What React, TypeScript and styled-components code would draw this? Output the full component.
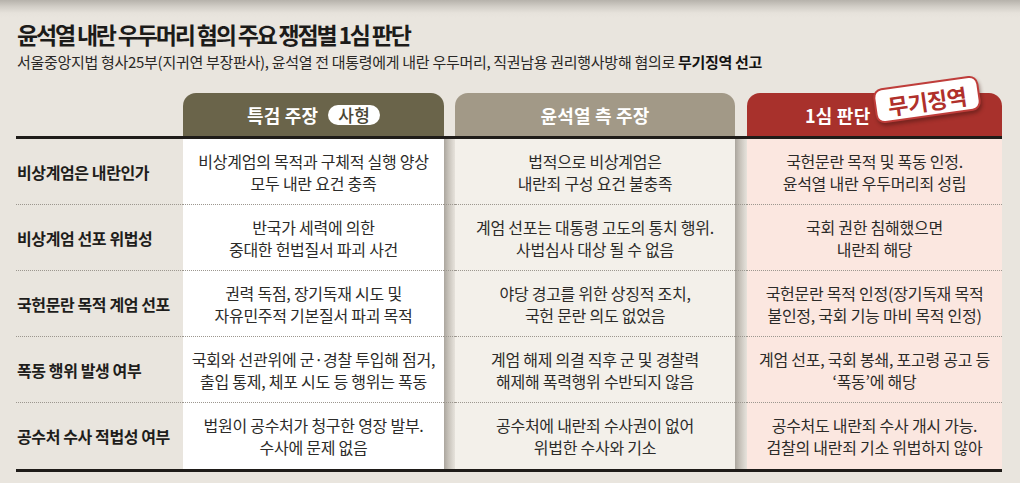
import React from "react";
import styled, { createGlobalStyle, css } from "styled-components";

const GlobalStyle = createGlobalStyle`
  html, body { margin: 0; padding: 0; background: #e9e5de; }
  * { box-sizing: border-box; }
  body { font-family: "Noto Sans CJK KR", "Noto Sans", sans-serif; }
`;

const Page = styled.div`
  width: 1020px;
  height: 483px;
  overflow: hidden;
  padding: 18px 0 0 16px;
  background: linear-gradient(#b6b2ab 0px, #d3cfc8 7px, #e6e2db 13px, #e9e5de 18px);
`;

const Title = styled.h1`
  margin: 0;
  padding-left: 1px;
  font-size: 23px;
  line-height: 32px;
  font-weight: 700;
  letter-spacing: -2.2px;
  color: #1c1b19;
`;

const Subtitle = styled.p`
  margin: 0;
  padding-left: 1px;
  font-size: 15px;
  line-height: 24px;
  letter-spacing: -0.3px;
  color: #2a2826;
  b { font-weight: 700; color: #141312; }
`;

const Table = styled.div`
  margin-top: 19px;
  width: 986px;
  display: grid;
  grid-template-columns: 167px 261px 11px 280px 12px 255px;
  grid-template-rows: 43px 3px repeat(5, 66px) 3px;
`;

type Tone = "olive" | "taupe" | "red";

const tabColors: Record<Tone, string> = {
  olive: "#6a644a",
  taupe: "#a29987",
  red: "#a8312c",
};

const Tab = styled.div<{ $tone: Tone; $start?: number }>`
  position: relative;
  background: ${(p) => tabColors[p.$tone]};
  border-radius: 13px 13px 0 0;
  display: flex;
  align-items: center;
  justify-content: ${(p) => (p.$start ? "flex-start" : "center")};
  padding-left: ${(p) => (p.$start ? `${p.$start}px` : "0")};
  gap: 10px;
  color: #ffffff;
  font-size: 18px;
  font-weight: 700;
  letter-spacing: 0.2px;
`;

const Pill = styled.span`
  display: inline-flex;
  align-items: center;
  justify-content: center;
  height: 20px;
  padding: 0 10px;
  border-radius: 10px;
  background: #ffffff;
  color: #4a4634;
  font-size: 17px;
  font-weight: 500;
  letter-spacing: 0.3px;
`;

const Badge = styled.span`
  position: absolute;
  left: 127px;
  top: -11px;
  width: 106px;
  height: 35px;
  display: flex;
  align-items: center;
  justify-content: center;
  background: #ffffff;
  border: 2px solid #bf3d3a;
  border-radius: 9px;
  color: #b0302b;
  font-size: 22px;
  font-weight: 700;
  letter-spacing: -0.5px;
  transform: rotate(-8deg);
  box-shadow: 1px 3px 4px rgba(60, 20, 15, 0.45);
`;

const Spacer = styled.div``;

const Rule = styled.div`
  grid-column: 1 / -1;
  background: #1f1c19;
`;

const rowLine = css<{ $last?: boolean }>`
  border-bottom: ${(p) => (p.$last ? "none" : "1px dotted #9c978f")};
`;

const Label = styled.div<{ $last?: boolean }>`
  ${rowLine};
  display: flex;
  align-items: center;
  padding-left: 1px;
  font-size: 16px;
  font-weight: 700;
  letter-spacing: -0.4px;
  color: #1e1d1b;
`;

const cellBg: Record<Tone, string> = {
  olive: "#ffffff",
  taupe: "#f3f0ea",
  red: "#fbe7e0",
};

const Cell = styled.div<{ $tone: Tone; $last?: boolean }>`
  ${rowLine};
  background: ${(p) => cellBg[p.$tone]};
  display: flex;
  align-items: center;
  justify-content: center;
  text-align: center;
  font-size: 16px;
  line-height: 22px;
  letter-spacing: -0.25px;
  color: #2c2b29;
`;

const Gap = styled.div<{ $last?: boolean }>`
  ${rowLine};
  background: linear-gradient(to right, #aba69e 0%, #c6c1b9 40%, #dcd8d1 80%, #e6e2db 100%);
`;

type Row = { label: string; a: string[]; b: string[]; c: string[] };

const rows: Row[] = [
  {
    label: "비상계엄은 내란인가",
    a: ["비상계엄의 목적과 구체적 실행 양상", "모두 내란 요건 충족"],
    b: ["법적으로 비상계엄은", "내란죄 구성 요건 불충족"],
    c: ["국헌문란 목적 및 폭동 인정.", "윤석열 내란 우두머리죄 성립"],
  },
  {
    label: "비상계엄 선포 위법성",
    a: ["반국가 세력에 의한", "중대한 헌법질서 파괴 사건"],
    b: ["계엄 선포는 대통령 고도의 통치 행위.", "사법심사 대상 될 수 없음"],
    c: ["국회 권한 침해했으면", "내란죄 해당"],
  },
  {
    label: "국헌문란 목적 계엄 선포",
    a: ["권력 독점, 장기독재 시도 및", "자유민주적 기본질서 파괴 목적"],
    b: ["야당 경고를 위한 상징적 조치,", "국헌 문란 의도 없었음"],
    c: ["국헌문란 목적 인정(장기독재 목적", "불인정, 국회 기능 마비 목적 인정)"],
  },
  {
    label: "폭동 행위 발생 여부",
    a: ["국회와 선관위에 군·경찰 투입해 점거,", "출입 통제, 체포 시도 등 행위는 폭동"],
    b: ["계엄 해제 의결 직후 군 및 경찰력", "해제해 폭력행위 수반되지 않음"],
    c: ["계엄 선포, 국회 봉쇄, 포고령 공고 등", "‘폭동’에 해당"],
  },
  {
    label: "공수처 수사 적법성 여부",
    a: ["법원이 공수처가 청구한 영장 발부.", "수사에 문제 없음"],
    b: ["공수처에 내란죄 수사권이 없어", "위법한 수사와 기소"],
    c: ["공수처도 내란죄 수사 개시 가능.", "검찰의 내란죄 기소 위법하지 않아"],
  },
];

const Lines: React.FC<{ lines: string[] }> = ({ lines }) => (
  <span>
    {lines.map((l, i) => (
      <React.Fragment key={i}>
        {i > 0 && <br />}
        {l}
      </React.Fragment>
    ))}
  </span>
);

export default function App() {
  return (
    <>
      <GlobalStyle />
      <Page>
        <Title>윤석열 내란 우두머리 혐의 주요 쟁점별 1심 판단</Title>
        <Subtitle>
          서울중앙지법 형사25부(지귀연 부장판사), 윤석열 전 대통령에게 내란 우두머리, 직권남용 권리행사방해 혐의로{" "}
          <b>무기징역 선고</b>
        </Subtitle>
        <Table>
          <Spacer />
          <Tab $tone="olive">
            특검 주장 <Pill>사형</Pill>
          </Tab>
          <Spacer />
          <Tab $tone="taupe">윤석열 측 주장</Tab>
          <Spacer />
          <Tab $tone="red" $start={58}>
            1심 판단
            <Badge>무기징역</Badge>
          </Tab>
          <Rule />
          {rows.map((r, i) => {
            const last = i === rows.length - 1;
            return (
              <React.Fragment key={r.label}>
                <Label $last={last}>{r.label}</Label>
                <Cell $tone="olive" $last={last}>
                  <Lines lines={r.a} />
                </Cell>
                <Gap $last={last} />
                <Cell $tone="taupe" $last={last}>
                  <Lines lines={r.b} />
                </Cell>
                <Gap $last={last} />
                <Cell $tone="red" $last={last}>
                  <Lines lines={r.c} />
                </Cell>
              </React.Fragment>
            );
          })}
          <Rule />
        </Table>
      </Page>
    </>
  );
}
